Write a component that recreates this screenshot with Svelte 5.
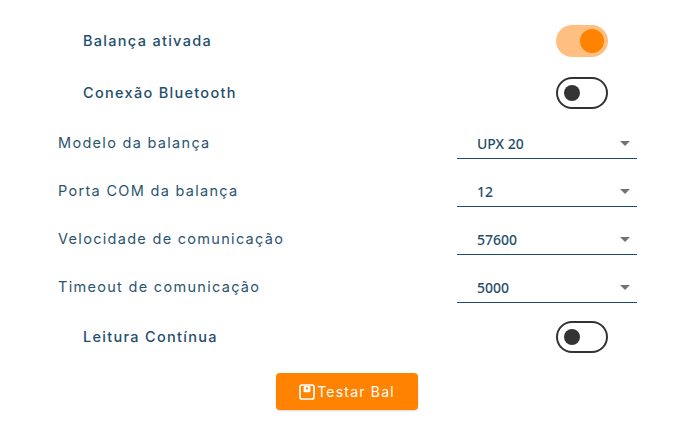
<script>
  const selects = [
    { label: 'Modelo da balança', value: 'UPX 20' },
    { label: 'Porta COM da balança', value: '12' },
    { label: 'Velocidade de comunicação', value: '57600' },
    { label: 'Timeout de comunicação', value: '5000' }
  ];
</script>

{#snippet toggle(label, on)}
  <div class="switch-row">
    <span class="switch-label">{label}</span>
    <span class="switch" class:on><span class="thumb"></span></span>
  </div>
{/snippet}

<main class="form">
  {@render toggle('Balança ativada', true)}
  {@render toggle('Conexão Bluetooth', false)}
  <div class="selects">
    {#each selects as s}
      <div class="select-row">
        <span class="select-label">{s.label}</span>
        <div class="select">
          <span class="value">{s.value}</span>
          <span class="arrow"></span>
        </div>
      </div>
    {/each}
  </div>
  {@render toggle('Leitura Contínua', false)}
  <div class="actions">
    <button class="btn">
      <svg width="16" height="16" viewBox="0 0 16 16" fill="none">
        <rect x="1" y="1" width="14" height="14" rx="2" stroke="#fff" stroke-width="1.7"/>
        <rect x="4.6" y="2" width="6.8" height="6.2" rx=".8" fill="#fff"/>
        <rect x="7" y="3.4" width="2" height="2" fill="#ff8200"/>
      </svg>
      <span>Testar Bal</span>
    </button>
  </div>
</main>

<style>
  :global(body) {
    margin: 0;
    background: #fff;
  }
  .form {
    width: 699px;
    height: 439px;
    box-sizing: border-box;
    padding: 15px 62px 0 58px;
    font-family: "Inter", "Liberation Sans", sans-serif;
    color: #1f4e6b;
  }
  .switch-row {
    display: flex;
    align-items: center;
    justify-content: space-between;
    height: 52px;
    padding: 0 29px 0 25px;
    box-sizing: border-box;
    width: 579px;
  }
  .switch-label {
    font-size: 14.5px;
    font-weight: 500;
    letter-spacing: 1.3px;
    line-height: 20px;
    margin-top: -1px;
    color: #1f4e6b;
  }
  .switch {
    box-sizing: border-box;
    width: 52px;
    height: 32px;
    border-radius: 16px;
    border: 2px solid #333;
    background: #fff;
    display: flex;
    align-items: center;
    padding-left: 6px;
  }
  .thumb {
    width: 16px;
    height: 16px;
    border-radius: 50%;
    background: #333;
  }
  .switch.on {
    border: none;
    background: #ffbf80;
    justify-content: flex-end;
    padding: 0 4px 0 0;
  }
  .switch.on .thumb {
    width: 24px;
    height: 24px;
    background: #ff8200;
  }
  .selects {
    display: flex;
    flex-direction: column;
    gap: 16px;
    padding: 8px 0;
  }
  .select-row {
    display: flex;
    align-items: flex-start;
    justify-content: space-between;
    height: 32px;
  }
  .select-label {
    font-size: 14.5px;
    letter-spacing: 1.3px;
    line-height: 20px;
    padding-top: 6px;
    color: #2a5570;
  }
  .select {
    box-sizing: border-box;
    width: 180px;
    height: 32px;
    padding: 0 6px 0 20px;
    border-bottom: 1px solid #1f4e6b;
    display: flex;
    align-items: center;
    justify-content: space-between;
  }
  .value {
    font-family: "Noto Sans", "Open Sans", sans-serif;
    font-size: 14px;
    font-weight: 500;
    color: #1f4e6b;
    line-height: 20px;
    margin-top: 3px;
  }
  .arrow {
    width: 0;
    height: 0;
    border-left: 5px solid transparent;
    border-right: 5px solid transparent;
    border-top: 5px solid #757575;
    margin-top: 2px;
    margin-right: 1px;
  }
  .actions {
    display: flex;
    justify-content: center;
    padding: 10px 1px 0 0;
  }
  .btn {
    box-sizing: border-box;
    width: 142px;
    height: 37px;
    border: none;
    border-radius: 4px;
    background: #ff8200;
    color: #fff;
    display: flex;
    align-items: center;
    justify-content: center;
    gap: 2px;
    padding: 0;
    font-family: "Inter", "Liberation Sans", sans-serif;
    font-size: 14px;
    letter-spacing: 1.2px;
    box-shadow: 0 1px 2px rgba(0,0,0,.15);
  }
</style>
